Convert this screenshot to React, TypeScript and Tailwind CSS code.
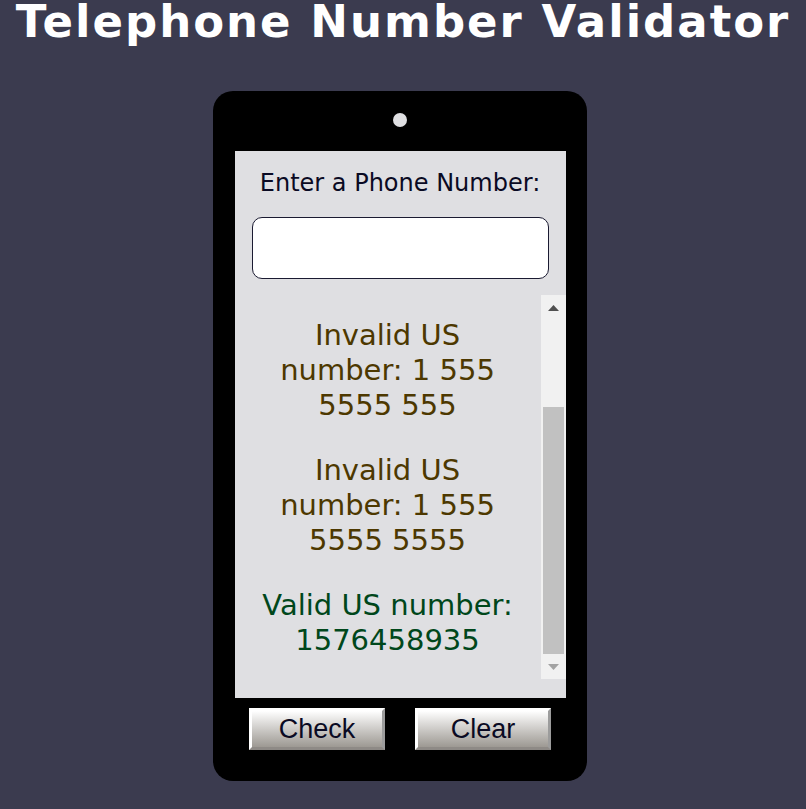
import React from "react";

const results = [
  { text: "Invalid US number: 1 555 5555 555", valid: false },
  { text: "Invalid US number: 1 555 5555 5555", valid: false },
  { text: "Valid US number: 1576458935", valid: true },
];

export default function App() {
  return (
    <div className="min-h-[809px] w-full bg-[#3b3b4f] overflow-hidden" style={{ fontFamily: '"DejaVu Sans", Verdana, sans-serif' }}>
      <h1 className="-mt-[1px] text-center text-[45px] font-bold leading-none tracking-[2px] text-white">
        Telephone Number Validator
      </h1>
      <div className="ml-[213px] mt-[47px] flex w-[374px] flex-col items-center rounded-[20px] bg-black pt-[22px] pb-[31px]">
        <div className="h-[14px] w-[14px] rounded-full bg-[#dfdfe2]" />
        <div className="mt-[24px] flex w-[331px] flex-col bg-[#dfdfe2]">
          <div className="px-[17px] pt-[18px]">
            <p className="text-center text-[24px] leading-[28px] text-[#0a0a23]">Enter a Phone Number:</p>
            <input
              type="text"
              className="mt-[20px] block h-[62px] w-full rounded-[10px] border border-[#1b1b32] bg-white outline-none"
            />
          </div>
          <div className="mt-[16px] mb-[19px] flex h-[384px]">
            <div className="flex flex-1 flex-col justify-end gap-[30px] overflow-hidden px-[21px] pb-[21px]">
              {results.map((r, i) => (
                <p
                  key={i}
                  className={`text-center text-[29px] leading-[35px] ${r.valid ? "text-[#00471b]" : "text-[#4d3800]"}`}
                >
                  {r.text}
                </p>
              ))}
            </div>
            <div className="flex w-[25px] flex-col bg-[#f1f1f1]">
              <div className="flex h-[25px] items-center justify-center">
                <svg width="11" height="6" viewBox="0 0 11 6"><polygon points="5.5,0 11,6 0,6" fill="#505050" /></svg>
              </div>
              <div className="flex-1 px-[2px] pt-[87px]">
                <div className="h-[247px] bg-[#c1c1c1]" />
              </div>
              <div className="flex h-[25px] items-center justify-center">
                <svg width="11" height="6" viewBox="0 0 11 6"><polygon points="0,0 11,0 5.5,6" fill="#a3a3a3" /></svg>
              </div>
            </div>
          </div>
        </div>
        <div className="mt-[10px] flex gap-[30px]">
          {["Check", "Clear"].map((b) => (
            <button
              key={b}
              className="h-[42px] w-[136px] border-[3px] border-t-[#ffffff] border-l-[#ffffff] border-r-[#9c9c9c] border-b-[#8e8a86] bg-gradient-to-b from-white to-[#9d9993] text-[27px] leading-none text-[#0a0a23]"
              style={{ fontFamily: '"Liberation Sans", Arial, sans-serif' }}
            >
              {b}
            </button>
          ))}
        </div>
      </div>
    </div>
  );
}
